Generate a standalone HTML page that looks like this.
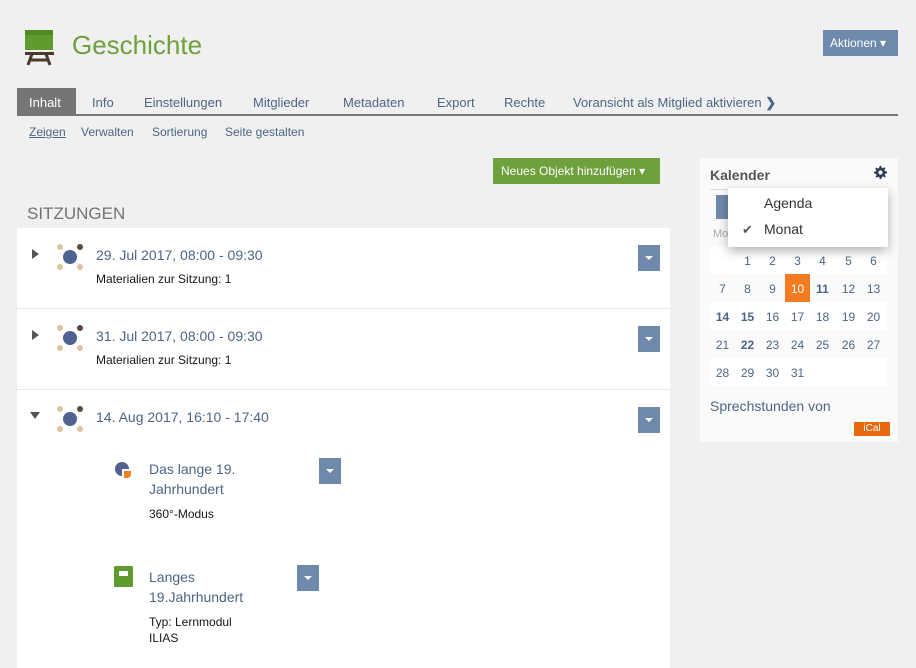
<!DOCTYPE html>
<html><head><meta charset="utf-8"><style>
*{margin:0;padding:0;box-sizing:border-box}
body{width:916px;height:662px;background:#f0f0f0;font-family:"Liberation Sans",sans-serif;position:relative;overflow:hidden;color:#161616}
.abs{position:absolute}
.tabs span{position:absolute;top:95px;font-size:13px;color:#4c6586}
.sub span{position:absolute;top:125px;font-size:12px;color:#4c6586}
.dd{position:absolute;width:22px;height:26px;background:#6f89ad}
.dd:after{content:"";position:absolute;left:7px;top:11px;border-left:4px solid transparent;border-right:4px solid transparent;border-top:4px solid #fff}
.date{position:absolute;font-size:14px;color:#4c6586}
.sm{position:absolute;font-size:12px;color:#161616}
.tri{position:absolute;width:0;height:0}
.cal div{position:absolute;width:25px;text-align:center;font-size:12px;color:#4c6586}
.row{position:absolute;left:710px;width:177px;height:28px}
</style></head><body>
<svg class="abs" style="left:24px;top:30px" width="32" height="36"><rect x="1" y="0" width="28" height="20" fill="#5f9b2e"/><rect x="1" y="0" width="28" height="5" fill="#4f8a22"/><rect x="1" y="22" width="29" height="3" fill="#4b3a2c"/><path d="M8 24 L4 35 M22 24 L26 35 M6 30 H24" stroke="#4b3a2c" stroke-width="3" fill="none"/></svg>
<div class="abs" style="left:72px;top:30px;font-size:26px;color:#6ea03c">Geschichte</div>
<div class="abs" style="left:823px;top:30px;width:75px;height:26px;background:#6f89ad;color:#fff;font-size:12px;line-height:26px;padding-left:7px">Aktionen ▾</div>
<div class="abs" style="left:17px;top:88px;width:59px;height:27px;background:#757575"></div>
<div class="abs" style="left:17px;top:114px;width:881px;height:2px;background:#757575"></div>
<div class="tabs"><span style="left:29px;color:#fff">Inhalt</span><span style="left:92px">Info</span><span style="left:144px">Einstellungen</span><span style="left:253px">Mitglieder</span><span style="left:343px">Metadaten</span><span style="left:437px">Export</span><span style="left:504px">Rechte</span><span style="left:573px">Voransicht als Mitglied aktivieren <b>❯</b></span></div>
<div class="sub"><span style="left:29px;text-decoration:underline">Zeigen</span><span style="left:81px">Verwalten</span><span style="left:152px">Sortierung</span><span style="left:225px">Seite gestalten</span></div>
<div class="abs" style="left:493px;top:158px;width:167px;height:26px;background:#6ea03c;color:#fff;font-size:12px;line-height:26px;padding-left:8px">Neues Objekt hinzufügen ▾</div>
<div class="abs" style="left:27px;top:204px;font-size:17px;color:#737373">SITZUNGEN</div>
<div class="abs" style="left:17px;top:228px;width:653px;height:440px;background:#fff"></div>
<div class="abs" style="left:17px;top:308px;width:653px;height:1px;background:#e8e8e8"></div>
<div class="abs" style="left:17px;top:389px;width:653px;height:1px;background:#e8e8e8"></div>
<div class="tri" style="left:32px;top:249px;border-top:5px solid transparent;border-bottom:5px solid transparent;border-left:7px solid #555"></div>
<div class="tri" style="left:32px;top:330px;border-top:5px solid transparent;border-bottom:5px solid transparent;border-left:7px solid #555"></div>
<div class="tri" style="left:30px;top:412px;border-left:5px solid transparent;border-right:5px solid transparent;border-top:7px solid #555"></div>
<svg class="abs" style="left:56px;top:243px" width="28" height="28"><circle cx="14" cy="14" r="7" fill="#4f6290"/><circle cx="4" cy="4" r="3" fill="#dfc39c"/><circle cx="24" cy="4" r="3" fill="#5a4a40"/><circle cx="4" cy="24" r="3" fill="#dfc39c"/><circle cx="24" cy="24" r="3" fill="#dfc39c"/></svg>
<svg class="abs" style="left:56px;top:324px" width="28" height="28"><circle cx="14" cy="14" r="7" fill="#4f6290"/><circle cx="4" cy="4" r="3" fill="#dfc39c"/><circle cx="24" cy="4" r="3" fill="#5a4a40"/><circle cx="4" cy="24" r="3" fill="#dfc39c"/><circle cx="24" cy="24" r="3" fill="#dfc39c"/></svg>
<svg class="abs" style="left:56px;top:405px" width="28" height="28"><circle cx="14" cy="14" r="7" fill="#4f6290"/><circle cx="4" cy="4" r="3" fill="#dfc39c"/><circle cx="24" cy="4" r="3" fill="#5a4a40"/><circle cx="4" cy="24" r="3" fill="#dfc39c"/><circle cx="24" cy="24" r="3" fill="#dfc39c"/></svg>
<div class="date" style="left:96px;top:247px">29. Jul 2017, 08:00 - 09:30</div>
<div class="sm" style="left:96px;top:272px">Materialien zur Sitzung: 1</div>
<div class="date" style="left:96px;top:328px">31. Jul 2017, 08:00 - 09:30</div>
<div class="sm" style="left:96px;top:353px">Materialien zur Sitzung: 1</div>
<div class="date" style="left:96px;top:409px">14. Aug 2017, 16:10 - 17:40</div>
<div class="dd" style="left:638px;top:245px"></div>
<div class="dd" style="left:638px;top:326px"></div>
<div class="dd" style="left:638px;top:407px"></div>
<svg class="abs" style="left:114px;top:461px" width="20" height="20"><path d="M8 1 A7 7 0 1 0 8 15 L8 8 L15 8 A7 7 0 0 0 8 1Z" fill="#4f6290"/><path d="M10 10 H17 V13 A4 4 0 0 1 13 17 H10Z" fill="#f08020"/></svg>
<div class="date" style="left:149px;top:459px;line-height:20px">Das lange 19.<br>Jahrhundert</div>
<div class="sm" style="left:149px;top:507px">360°-Modus</div>
<div class="dd" style="left:319px;top:458px"></div>
<svg class="abs" style="left:114px;top:566px" width="20" height="22"><rect x="0" y="0" width="19" height="21" rx="1" fill="#5f9b2e"/><rect x="5" y="5" width="9" height="5" fill="#fff"/></svg>
<div class="date" style="left:149px;top:567px;line-height:20px">Langes<br>19.Jahrhundert</div>
<div class="sm" style="left:149px;top:614px;line-height:16px">Typ: Lernmodul<br>ILIAS</div>
<div class="dd" style="left:297px;top:565px"></div>
<div class="abs" style="left:700px;top:158px;width:198px;height:284px;background:#fafafa"></div>
<div class="abs" style="left:710px;top:167px;font-size:14px;color:#555;font-weight:bold">Kalender</div>
<svg class="abs" style="left:874px;top:166px" width="13" height="13" viewBox="0 0 16 16"><path fill="#2d3e55" d="M7 0h2l.4 2.2 1.5.6 1.8-1.3 1.4 1.4-1.3 1.8.6 1.5L16 7v2l-2.2.4-.6 1.5 1.3 1.8-1.4 1.4-1.8-1.3-1.5.6L9 16H7l-.4-2.2-1.5-.6-1.8 1.3-1.4-1.4 1.3-1.8-.6-1.5L0 9V7l2.2-.4.6-1.5-1.3-1.8 1.4-1.4 1.8 1.3 1.5-.6z"/><circle cx="8" cy="8" r="2.6" fill="#fafafa"/></svg>
<div class="abs" style="left:710px;top:189px;width:177px;height:1px;background:#ddd"></div>
<div class="abs" style="left:716px;top:195px;width:14px;height:24px;background:#6f89ad"></div>
<div class="abs" style="left:713px;top:228px;font-size:11px;color:#aaa">Mo</div>
<div class="row" style="top:246px;background:#fff"></div>
<div class="row" style="top:302px;background:#fff"></div>
<div class="row" style="top:358px;background:#fff"></div>
<div class="abs" style="left:785px;top:274px;width:25px;height:28px;background:#f47b20"></div>
<div class="cal">
<div style="left:735px;top:254px">1</div><div style="left:760px;top:254px">2</div><div style="left:785px;top:254px">3</div><div style="left:810px;top:254px">4</div><div style="left:836px;top:254px">5</div><div style="left:861px;top:254px">6</div>
<div style="left:710px;top:282px">7</div><div style="left:735px;top:282px">8</div><div style="left:760px;top:282px">9</div><div style="left:785px;top:282px;color:#fff">10</div><div style="left:810px;top:282px;font-weight:bold">11</div><div style="left:836px;top:282px">12</div><div style="left:861px;top:282px">13</div>
<div style="left:710px;top:310px;font-weight:bold">14</div><div style="left:735px;top:310px;font-weight:bold">15</div><div style="left:760px;top:310px">16</div><div style="left:785px;top:310px">17</div><div style="left:810px;top:310px">18</div><div style="left:836px;top:310px">19</div><div style="left:861px;top:310px">20</div>
<div style="left:710px;top:338px">21</div><div style="left:735px;top:338px;font-weight:bold">22</div><div style="left:760px;top:338px">23</div><div style="left:785px;top:338px">24</div><div style="left:810px;top:338px">25</div><div style="left:836px;top:338px">26</div><div style="left:861px;top:338px">27</div>
<div style="left:710px;top:366px">28</div><div style="left:735px;top:366px">29</div><div style="left:760px;top:366px">30</div><div style="left:785px;top:366px">31</div>
</div>
<div class="abs" style="left:710px;top:398px;font-size:14px;color:#4c6586">Sprechstunden von</div>
<div class="abs" style="left:854px;top:422px;width:36px;height:14px;background:#e8680c;color:#fff;font-size:10px;text-align:center;line-height:14px">iCal</div>
<div class="abs" style="left:728px;top:188px;width:160px;height:59px;background:#fff;box-shadow:0 4px 10px rgba(0,0,0,.3)"></div>
<div class="abs" style="left:764px;top:195px;font-size:14px;color:#333">Agenda</div>
<div class="abs" style="left:742px;top:222px;font-size:13px;color:#555">✔</div>
<div class="abs" style="left:764px;top:221px;font-size:14px;color:#333">Monat</div>
</body></html>
